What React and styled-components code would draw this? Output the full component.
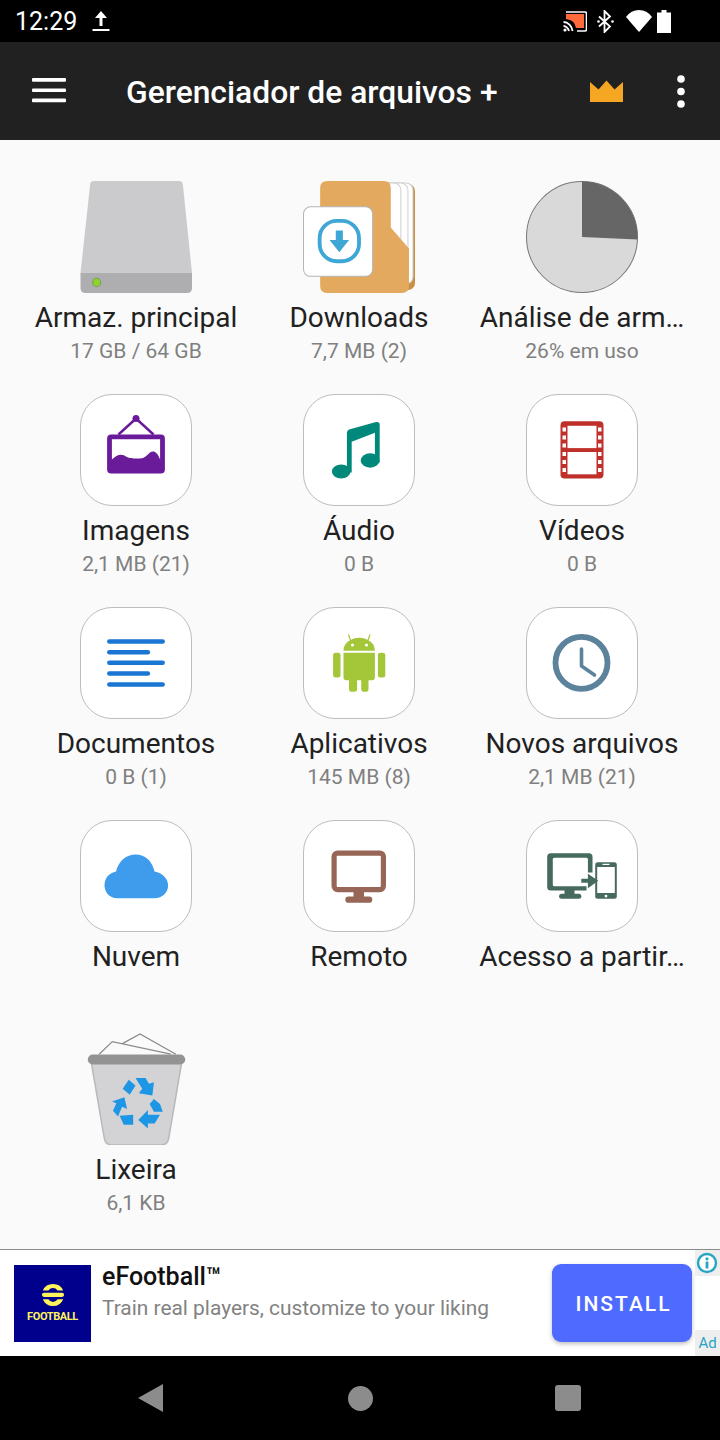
import styled, { createGlobalStyle } from "styled-components";

const GlobalStyle = createGlobalStyle`
  html, body { margin: 0; padding: 0; background: #000; }
  * { box-sizing: border-box; }
  body { font-family: Roboto, "Liberation Sans", sans-serif; }
`;

const Screen = styled.div`
  width: 720px;
  height: 1440px;
  display: flex;
  flex-direction: column;
  overflow: hidden;
`;

const StatusBar = styled.div`
  height: 42px;
  background: #000;
  color: #fff;
  display: flex;
  align-items: center;
  padding: 0 49px 0 15px;
`;

const Clock = styled.span`
  font-size: 25px;
  margin-right: 15px;
`;

const StatusIcons = styled.div`
  margin-left: auto;
  display: flex;
  align-items: center;
  gap: 10px;
`;

const AppBar = styled.header`
  height: 98px;
  background: #212121;
  color: #fff;
  display: flex;
  align-items: center;
  padding: 0 34px 0 32px;
`;

const Title = styled.h1`
  font-size: 31.8px;
  font-weight: 500;
  margin: 2px 0 0 60px;
  flex: 1;
`;

const Crown = styled.svg`
  margin-right: 52px;
`;

const Main = styled.main`
  flex: 1;
  background: #fafafa;
  padding: 41px 0 0 24.5px;
  display: grid;
  grid-template-columns: repeat(3, 223px);
  grid-auto-rows: 213px;
`;

const Cell = styled.div`
  display: flex;
  flex-direction: column;
  align-items: center;
  min-width: 0;
`;

const Tile = styled.div`
  width: 112px;
  height: 112px;
  flex: none;
  border-radius: 32px;
  background: ${(p) => (p.$bare ? "transparent" : "#fff")};
  border: ${(p) => (p.$bare ? "none" : "1px solid #bdbdbd")};
  display: flex;
  align-items: center;
  justify-content: center;
`;

const Label = styled.div`
  margin-top: 7px;
  font-size: 28px;
  line-height: 36px;
  color: #212121;
  text-align: center;
  white-space: nowrap;
`;

const Sub = styled.div`
  font-size: 21px;
  line-height: 30px;
  color: #808080;
  text-align: center;
`;

const Ad = styled.aside`
  position: relative;
  height: 107px;
  background: #fff;
  border-top: 1px solid #8a8a8a;
  display: flex;
  align-items: center;
  padding: 0 28px 0 14px;
`;

const AdLogo = styled.div`
  width: 77px;
  height: 77px;
  flex: none;
  background: #00008c;
  display: flex;
  flex-direction: column;
  align-items: center;
  padding-top: 17px;
`;

const AdLogoText = styled.span`
  font-size: 11px;
  line-height: 14px;
  font-weight: 700;
  letter-spacing: -0.4px;
  color: #fff45a;
  margin-top: 2px;
`;

const AdText = styled.div`
  flex: 1;
  margin-left: 11px;
  min-width: 0;
  align-self: flex-start;
  padding-top: 11px;
`;

const AdTitle = styled.div`
  font-size: 25px;
  line-height: 32px;
  font-weight: 500;
  color: #111;
`;

const AdDesc = styled.div`
  font-size: 20.9px;
  line-height: 31px;
  color: #828282;
`;

const Install = styled.button`
  width: 140px;
  height: 78px;
  border: none;
  border-radius: 9px;
  background: #4f6bff;
  color: #fff;
  font-family: inherit;
  font-size: 21px;
  font-weight: 500;
  letter-spacing: 2px;
  padding: 2px 0 0 3px;
  box-shadow: 0 2px 4px rgba(0, 0, 0, 0.25);
`;

const AdBadge = styled.div`
  position: absolute;
  right: 0;
  ${(p) => (p.$bottom ? "bottom: 0;" : "top: 0;")}
  width: 25px;
  height: 26px;
  background: #eeeeee;
  color: #27a5c4;
  font-size: 15px;
  display: flex;
  align-items: center;
  justify-content: center;
`;

const NavBar = styled.nav`
  height: 84px;
  background: #000;
  display: grid;
  grid-template-columns: 302px 116px 302px;
  justify-items: center;
  align-items: center;
`;

const BackKey = styled.div`
  justify-self: end;
  margin-right: 139px;
  width: 0;
  height: 0;
  border-top: 14px solid transparent;
  border-bottom: 14px solid transparent;
  border-right: 25px solid #8c8c8c;
`;

const HomeKey = styled.div`
  width: 25px;
  height: 25px;
  border-radius: 50%;
  background: #8c8c8c;
`;

const RecentKey = styled.div`
  justify-self: start;
  margin-left: 137px;
  width: 26px;
  height: 26px;
  border-radius: 3px;
  background: #8c8c8c;
`;

const Drive = () => (
  <svg width="112" height="112" viewBox="0 0 111 111">
    <path d="M14 0H98Q102 0 102 4L111 91H0.5L10 4Q10 0 14 0Z" fill="#cbcbcd" />
    <path d="M0.5 91H111V106Q111 111 106 111H5.5Q0.5 111 0.5 106Z" fill="#aeaeb0" />
    <circle cx="16.5" cy="100.5" r="4" fill="#8fd130" stroke="#7aa04a" strokeWidth="1" />
  </svg>
);

const Downloads = () => (
  <svg width="112" height="112" viewBox="0 0 111 111">
    <rect x="60" y="3" width="51" height="105" rx="7" fill="#c98f42" />
    <rect x="58" y="2" width="51" height="100" rx="7" fill="#fff" stroke="#cfcfcf" />
    <rect x="53" y="2" width="51" height="100" rx="7" fill="#fff" stroke="#cfcfcf" />
    <rect x="47" y="2" width="50" height="100" rx="7" fill="#fff" stroke="#cfcfcf" />
    <path d="M24 0H80Q87 0 87 7V46L105 67V104Q105 111 98 111H24Q17 111 17 104V7Q17 0 24 0Z" fill="#e3a95f" />
    <rect x="0.5" y="25.5" width="68.5" height="69" rx="7" fill="#fff" stroke="#b5b5b5" />
    <rect x="16.5" y="39.5" width="39" height="40" rx="17" fill="none" stroke="#3fa7d6" strokeWidth="3.8" />
    <path d="M32.5 49H39.5V58.5H45.7L36 70.7L26.3 58.5H32.5Z" fill="#3fa7d6" />
  </svg>
);

const Pie = () => (
  <svg width="112" height="112" viewBox="0 0 111 111">
    <circle cx="55.5" cy="55.5" r="55" fill="#d9d9d9" stroke="#777" strokeWidth="1" />
    <path d="M55.5 0.5A55 55 0 0 1 110.5 58L55.5 55.5Z" fill="#666" />
  </svg>
);

const Images = () => (
  <svg width="80" height="80" viewBox="15.5 15.5 80 80">
    <path d="M38 40L55.5 24L73 40" fill="none" stroke="#6a1b9a" strokeWidth="2.5" />
    <circle cx="55.5" cy="24" r="3.5" fill="#6a1b9a" />
    <rect x="26.6" y="40" width="57.8" height="39" rx="4" fill="#6a1b9a" />
    <path d="M31.4 44.7H79.6V65Q77 58 73.5 57C68 56 67 64 59 64C51 64 48 64 44 61C39 59 36 61 31.4 65Z" fill="#fff" />
  </svg>
);

const Music = () => (
  <svg width="80" height="80" viewBox="15.5 15.5 80 80">
    <path d="M43.4 38.5Q43.4 35.7 46.5 34.7L72.5 27.5Q76.2 27 76.2 30V68H71.4V38.3L48.2 47.3V78H43.4Z" fill="#00897b" />
    <ellipse cx="37.7" cy="77" rx="9.3" ry="7" fill="#00897b" />
    <ellipse cx="66.6" cy="66" rx="9.4" ry="7.2" fill="#00897b" />
  </svg>
);

const Film = () => (
  <svg width="80" height="80" viewBox="15.5 15.5 80 80">
    <rect x="34" y="26.7" width="43" height="57.3" rx="4" fill="#c0302a" />
    <rect x="41" y="31.3" width="29" height="22.3" fill="#fff" />
    <rect x="41" y="57.5" width="29" height="22.3" fill="#fff" />
    {[33, 41, 49, 57.5, 65.5, 73.5].map((y) => (
      <g key={y} fill="#fff">
        <rect x="36" y={y} width="3.5" height="4" />
        <rect x="71.5" y={y} width="3.5" height="4" />
      </g>
    ))}
  </svg>
);

const Docs = () => (
  <svg width="80" height="80" viewBox="15.5 15.5 80 80">
    {[
      [34, 57.8],
      [44.7, 43],
      [55.3, 57.8],
      [66, 43],
      [77, 57.8],
    ].map(([y, w]) => (
      <rect key={y} x="26.6" y={y - 2.2} width={w} height="4.4" rx="2.2" fill="#1976d2" />
    ))}
  </svg>
);

const Android = () => (
  <svg width="80" height="80" viewBox="15.5 15.5 80 80">
    <g fill="#a4c639">
      <path d="M40 43.3A15.7 13 0 0 1 71.4 43.3Z" />
      <path d="M40 45.3H71.4V70Q71.4 72.7 68.5 72.7H65V82Q65 84.3 62.5 84.3H60.2Q57.7 84.3 57.7 82V72.7H53.6V82Q53.6 84.3 51 84.3H48Q45.5 84.3 45.5 82V72.7H43Q40 72.7 40 70Z" />
      <rect x="29.6" y="45.3" width="7.4" height="24.7" rx="2.5" />
      <rect x="74.4" y="45.3" width="7.4" height="24.7" rx="2.5" />
    </g>
    <path d="M47 33L45 27M64.5 33L66.5 27" stroke="#a4c639" strokeWidth="1.2" />
    <circle cx="49" cy="37.5" r="1.6" fill="#fff" />
    <circle cx="63" cy="37.5" r="1.6" fill="#fff" />
  </svg>
);

const Recent = () => (
  <svg width="80" height="80" viewBox="15.5 15.5 80 80">
    <circle cx="55" cy="55.3" r="26" fill="none" stroke="#5d829c" strokeWidth="5.8" />
    <path d="M55 41.5V58.5L68 67.5" fill="none" stroke="#5d829c" strokeWidth="3.6" strokeLinecap="round" strokeLinejoin="round" />
  </svg>
);

const Cloud = () => (
  <svg width="80" height="80" viewBox="15.5 15.5 80 80">
    <path d="M37 77.7C28 77.7 24 70.5 24 65C24 57 29 52.5 35.5 51C38 40.5 46 34 55 34C65 34 72 41 74 51C82 52.5 87.6 58 87.6 65C87.6 72 82 77.7 74 77.7Z" fill="#3f9ced" />
  </svg>
);

const Remote = () => (
  <svg width="80" height="80" viewBox="15.5 15.5 80 80">
    <rect x="30.6" y="32.6" width="49.3" height="36.5" rx="3.5" fill="#fff" stroke="#976657" strokeWidth="5.2" />
    <rect x="50" y="71" width="10.5" height="7" fill="#976657" />
    <rect x="41.8" y="76" width="27" height="6.3" rx="3.1" fill="#976657" />
  </svg>
);

const Access = () => (
  <svg width="80" height="80" viewBox="15.5 15.5 80 80">
    <rect x="20.7" y="32.7" width="45.3" height="37.3" rx="3.5" fill="#466a5e" />
    <rect x="26.3" y="37.3" width="35.1" height="28.4" rx="1.5" fill="#fff" />
    <rect x="60" y="52" width="8" height="20" fill="#fff" />
    <rect x="38" y="69" width="10" height="6" fill="#466a5e" />
    <rect x="32.6" y="73.3" width="22.2" height="5" rx="2.5" fill="#466a5e" />
    <rect x="68.7" y="41.7" width="21.6" height="36.6" rx="2.5" fill="#466a5e" />
    <rect x="70.7" y="46.5" width="17.6" height="26" fill="#fff" />
    <rect x="76" y="43.3" width="7" height="1.2" fill="#fff" />
    <circle cx="79.5" cy="75.6" r="1.4" fill="#fff" />
    <path d="M54.8 58.3H61.4V53.3L71.8 60.3L61.4 67.7V62.3H54.8Z" fill="#466a5e" strokeLinejoin="round" />
  </svg>
);

const Bin = () => (
  <svg width="112" height="112" viewBox="0 0 111 111">
    <path d="M19 21L32 8.5L90 21M42 10.5L59.5 1L95 21" fill="none" stroke="#8a8a8a" strokeWidth="1.2" />
    <path d="M11 28H101L88 104Q87 111 80 111H32Q25 111 24 104Z" fill="#d3d3d5" stroke="#b9b9bb" strokeWidth="1.5" />
    <rect x="7.7" y="21.3" width="96.6" height="10" rx="5" fill="#939393" />
    <g fill="#1e96e6">
      <path d="M48.3 46.3L55 52L49.3 61.3L42.3 55.3Z" />
      <path d="M55 44.7H65L68.3 50.3L73.3 48.7L71.7 62L58.3 59.7L61.7 55.3Z" />
      <path d="M73.3 65.3L79.3 70.3L82 78H73.3L69 70.3Z" />
      <path d="M79.3 81L74 89.7H67.3V94.7L57.7 86.3L67.3 76.3V81Z" />
      <path d="M39.3 82L52.7 81V91H43.3Z" />
      <path d="M31.7 68L44 63.7L46.7 75.3L41.7 73L37.7 82.7L32.7 77L36 69.7Z" />
    </g>
  </svg>
);

const items = [
  { icon: Drive, label: "Armaz. principal", sub: "17 GB / 64 GB", bare: true },
  { icon: Downloads, label: "Downloads", sub: "7,7 MB (2)", bare: true },
  { icon: Pie, label: "Análise de arm…", sub: "26% em uso", bare: true },
  { icon: Images, label: "Imagens", sub: "2,1 MB (21)" },
  { icon: Music, label: "Áudio", sub: "0 B" },
  { icon: Film, label: "Vídeos", sub: "0 B" },
  { icon: Docs, label: "Documentos", sub: "0 B (1)" },
  { icon: Android, label: "Aplicativos", sub: "145 MB (8)" },
  { icon: Recent, label: "Novos arquivos", sub: "2,1 MB (21)" },
  { icon: Cloud, label: "Nuvem" },
  { icon: Remote, label: "Remoto" },
  { icon: Access, label: "Acesso a partir…" },
  { icon: Bin, label: "Lixeira", sub: "6,1 KB", bare: true },
];

export default function App() {
  return (
    <Screen>
      <GlobalStyle />
      <StatusBar>
        <Clock>12:29</Clock>
        <svg width="18" height="24" viewBox="0 0 18 24">
          <path d="M9 2L15 9H10.5V17H7.5V9H3Z" fill="#fff" />
          <rect x="0.5" y="20" width="17" height="2" fill="#fff" />
        </svg>
        <StatusIcons>
          <svg width="24" height="21" viewBox="0 0 24 21">
            <path d="M3 1H22Q23.5 1 23.5 3V18Q23.5 20 22 20H14" fill="none" stroke="#fff" strokeWidth="1.6" />
            <path d="M3 3H21V17H13Q12 9 3 8Z" fill="#ff6a3c" />
            <path d="M0.5 11C5 11 9 15 9.5 20M0.5 15C3 15 5.5 17.5 6 20" fill="none" stroke="#fff" strokeWidth="1.8" />
            <circle cx="2" cy="19" r="1.6" fill="#fff" />
          </svg>
          <svg width="17" height="23" viewBox="0 0 17 23">
            <path d="M2 6.5L13 16.5L7.5 22V1L13 6.5L2 16.5" fill="none" stroke="#fff" strokeWidth="1.8" />
            <circle cx="1.5" cy="11.5" r="1.3" fill="#fff" />
            <circle cx="15.5" cy="11.5" r="1.3" fill="#fff" />
          </svg>
          <svg width="26" height="22" viewBox="0 0 26 22" style={{ marginLeft: 2 }}>
            <path d="M13 22L0 7Q5 0 13 0Q21 0 26 7Z" fill="#fff" />
          </svg>
          <svg width="14" height="23" viewBox="0 0 14 23" style={{ marginLeft: -5 }}>
            <path d="M4.5 0H9.5V2.5H14V23H0V2.5H4.5Z" fill="#fff" />
          </svg>
        </StatusIcons>
      </StatusBar>

      <AppBar>
        <svg width="34" height="26" viewBox="0 0 34 26">
          <rect y="0" width="34" height="3.8" rx="1" fill="#fff" />
          <rect y="10.4" width="34" height="3.6" rx="1" fill="#fff" />
          <rect y="20.4" width="34" height="3.8" rx="1" fill="#fff" />
        </svg>
        <Title>Gerenciador de arquivos +</Title>
        <Crown width="35" height="23" viewBox="0 0 35 23">
          <path d="M1 2L9.5 9.5L17.5 0.5L25.5 9.5L34 2V22H1Z" fill="#f5a623" />
        </Crown>
        <svg width="10" height="33" viewBox="0 0 10 33">
          <circle cx="5" cy="4" r="3.8" fill="#fff" />
          <circle cx="5" cy="16.5" r="3.8" fill="#fff" />
          <circle cx="5" cy="29" r="3.8" fill="#fff" />
        </svg>
      </AppBar>

      <Main>
        {items.map(({ icon: Icon, label, sub, bare }) => (
          <Cell key={label}>
            <Tile $bare={bare}>
              <Icon />
            </Tile>
            <Label>{label}</Label>
            {sub && <Sub>{sub}</Sub>}
          </Cell>
        ))}
      </Main>

      <Ad>
        <AdLogo>
          <svg width="24" height="26" viewBox="0 0 26 26">
            <path d="M2 8Q5 1 13 1Q21 1 24 8H18Q16 5.5 13 5.5Q10 5.5 8 8Z" fill="#fff45a" />
            <rect x="1" y="10.5" width="24" height="4.6" rx="2.3" fill="#fff45a" />
            <path d="M2 17.5H8Q10 20.5 13 20.5Q16 20.5 18 17.5H24Q21 25 13 25Q5 25 2 17.5Z" fill="#fff45a" />
          </svg>
          <AdLogoText>FOOTBALL</AdLogoText>
        </AdLogo>
        <AdText>
          <AdTitle>eFootball™</AdTitle>
          <AdDesc>Train real players, customize to your liking</AdDesc>
        </AdText>
        <Install>INSTALL</Install>
        <AdBadge>
          <svg width="22" height="22" viewBox="0 0 22 22" style={{ marginRight: 2 }}>
            <circle cx="11" cy="11" r="9" fill="#fff" stroke="#27a5c4" strokeWidth="2.4" />
            <rect x="9.6" y="9.5" width="2.8" height="7" fill="#27a5c4" />
            <circle cx="11" cy="6.8" r="1.6" fill="#27a5c4" />
          </svg>
        </AdBadge>
        <AdBadge $bottom>Ad</AdBadge>
      </Ad>

      <NavBar>
        <BackKey />
        <HomeKey />
        <RecentKey />
      </NavBar>
    </Screen>
  );
}
